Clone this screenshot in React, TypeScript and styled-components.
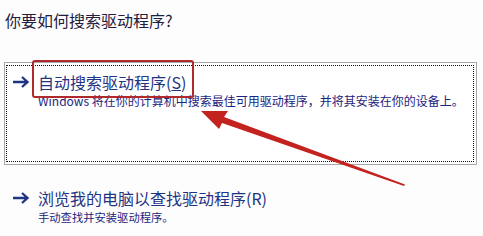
import React from "react";
import styled, { createGlobalStyle } from "styled-components";

const GlobalStyle = createGlobalStyle`
  html, body {
    margin: 0;
    padding: 0;
    background: #fdfdfd;
  }
  body {
    font-family: "Noto Sans CJK SC", "Noto Sans", sans-serif;
  }
`;

const Page = styled.div`
  position: relative;
  width: 483px;
  height: 236px;
  overflow: hidden;
  padding: 9px 6px 0 4px;
  box-sizing: border-box;
`;

const Heading = styled.h1`
  margin: 0 0 0 1px;
  font-size: 16px;
  font-weight: 400;
  line-height: 22px;
  color: #1f2040;
`;

const Frame = styled.div`
  margin-top: 31px;
  border: 1px solid #a8a8a8;
  padding: 2px 2px 2px 1px;
  background: #fff;
`;

const Focus = styled.div`
  border: 1px dotted #111;
  height: 97px;
  box-sizing: border-box;
  padding: 6px 0 0 5px;
`;

const Option = styled.div<{ $top?: number }>`
  display: flex;
  align-items: flex-start;
  gap: 9px;
  margin-top: ${({ $top }) => $top ?? 0}px;
  padding-left: ${({ $top }) => ($top ? 8 : 0)}px;
`;

const ArrowBox = styled.div`
  width: 17px;
  height: 20px;
  display: flex;
  align-items: center;
  flex-shrink: 0;
`;

const Texts = styled.div`
  display: flex;
  flex-direction: column;
`;

const Label = styled.span<{ $marked?: boolean }>`
  position: relative;
  align-self: flex-start;
  font-size: 16px;
  line-height: 20px;
  color: #1f3483;

  ${({ $marked }) =>
    $marked &&
    `
    &::after {
      content: "";
      position: absolute;
      left: -6px;
      right: -8px;
      top: -12px;
      bottom: -6px;
      border: 2.5px solid #ae2a2c;
      border-radius: 3px;
    }
  `}
`;

const Hint = styled.span<{ $size: number }>`
  font-size: ${({ $size }) => $size}px;
  line-height: 18px;
  color: #1c2480;
  white-space: nowrap;
`;

const Overlay = styled.svg`
  position: absolute;
  left: 0;
  top: 0;
  pointer-events: none;
`;

const BlueArrow = () => (
  <svg width="17" height="12" viewBox="0 0 17 12">
    <path d="M1 6H15.5M10 1L15.5 6L10 11" fill="none" stroke="#1f3483" strokeWidth="2.3" />
  </svg>
);

const App = () => (
  <>
    <GlobalStyle />
    <Page>
      <Heading>你要如何搜索驱动程序?</Heading>
      <Frame>
        <Focus>
          <Option>
            <ArrowBox>
              <BlueArrow />
            </ArrowBox>
            <Texts>
              <Label $marked>自动搜索驱动程序(<u>S</u>)</Label>
              <Hint $size={12}>Windows 将在你的计算机中搜索最佳可用驱动程序，并将其安装在你的设备上。</Hint>
            </Texts>
          </Option>
        </Focus>
      </Frame>
      <Option $top={23}>
        <ArrowBox>
          <BlueArrow />
        </ArrowBox>
        <Texts>
          <Label>浏览我的电脑以查找驱动程序(R)</Label>
          <Hint $size={11.3}>手动查找并安装驱动程序。</Hint>
        </Texts>
      </Option>
      <Overlay width="483" height="236" viewBox="0 0 483 236">
        <polygon
          points="201,111 228,111 224,117 405,184.5 404,186 222,123 219,129"
          fill="#c4221e"
        />
      </Overlay>
    </Page>
  </>
);

export default App;
